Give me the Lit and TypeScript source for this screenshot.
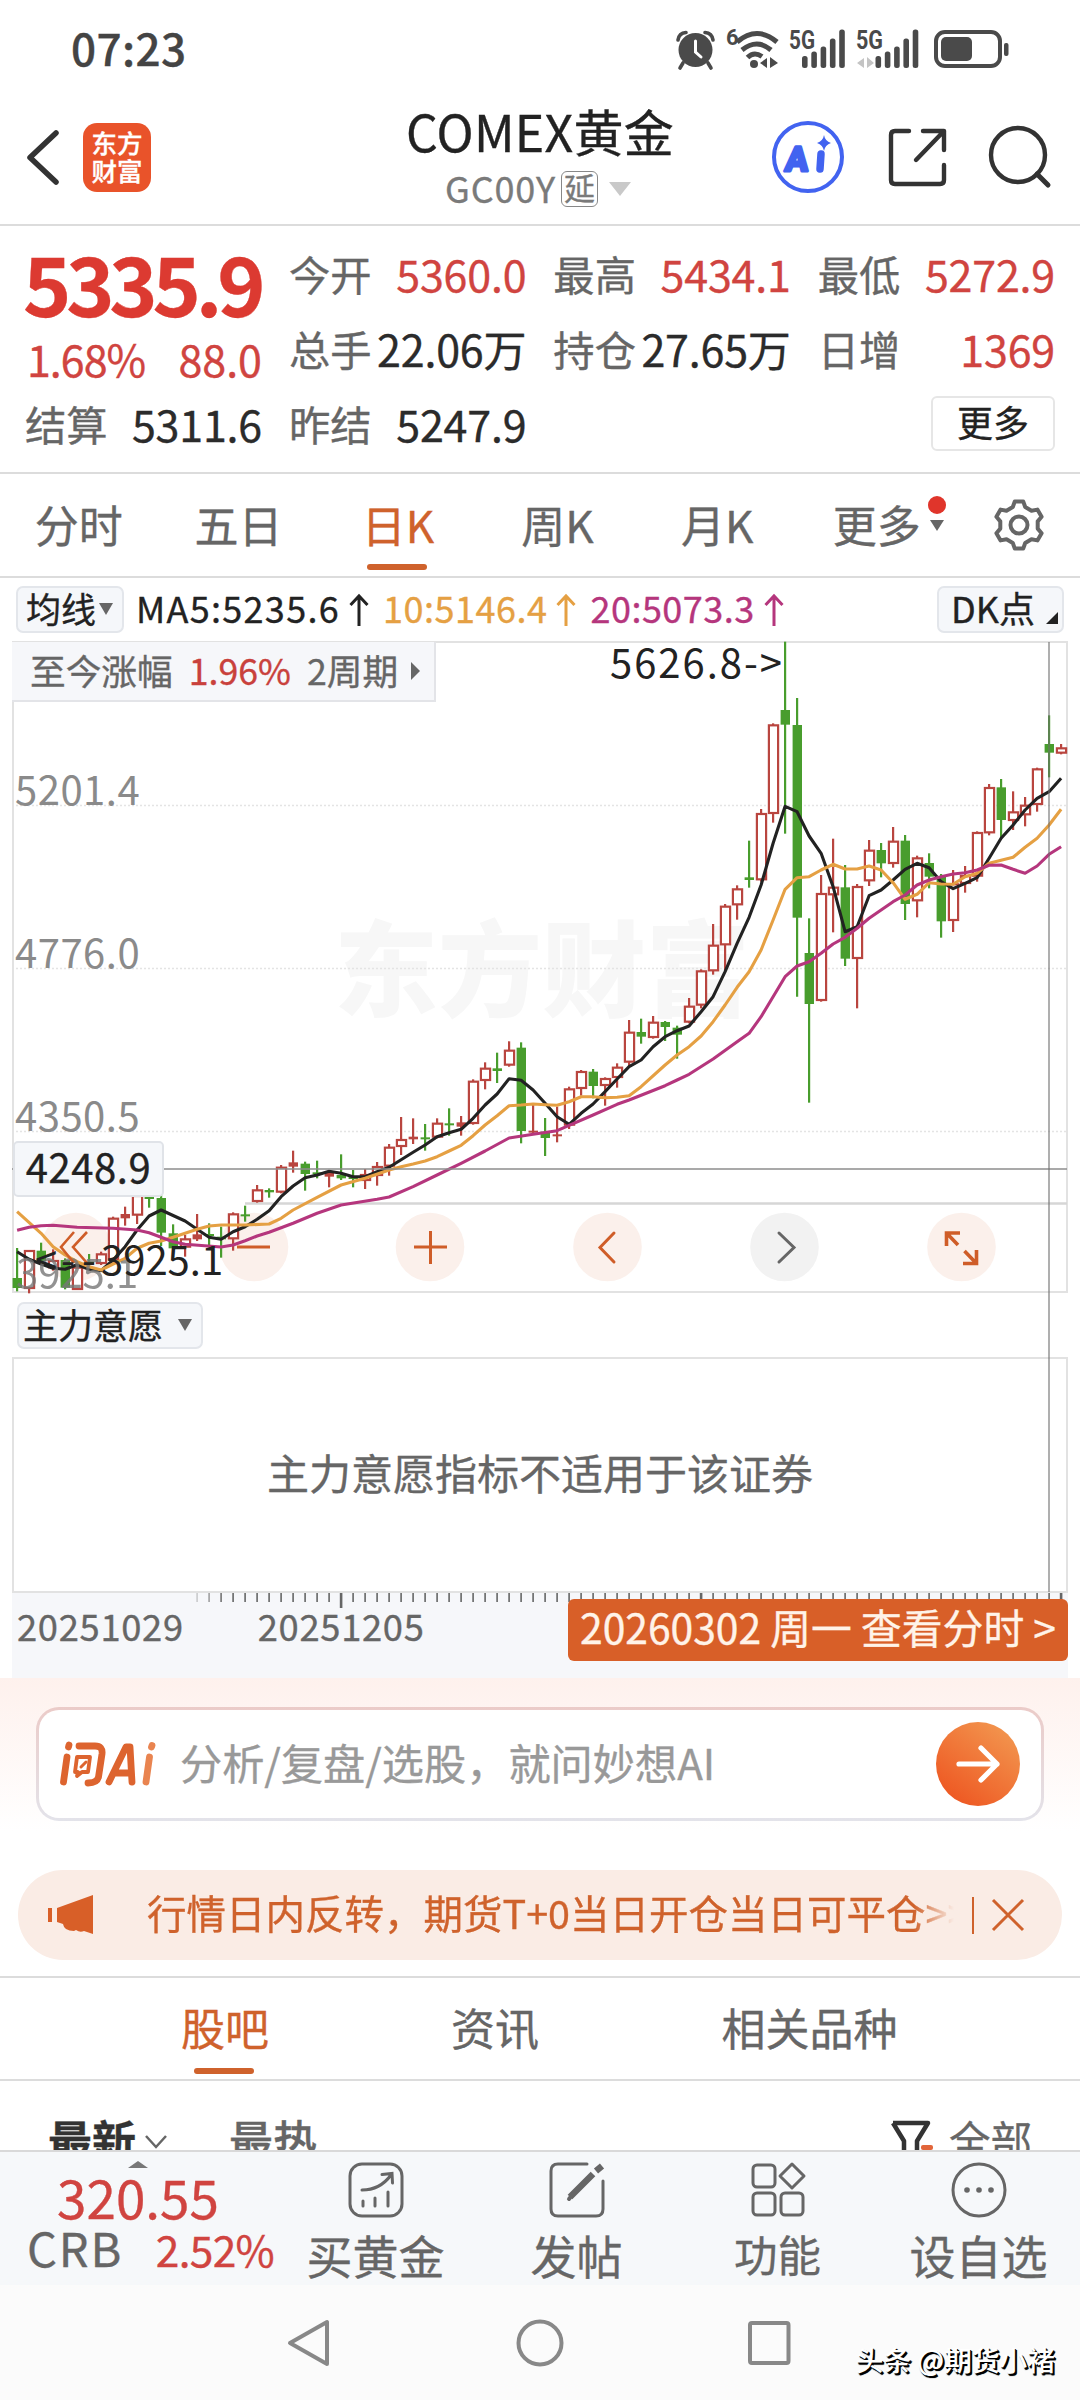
import { LitElement, html, css, svg } from "lit";
import { customElement } from "lit/decorators.js";

type Candle = [up: number, high: number, top: number, bottom: number, low: number];

/* Heights are in thirds of a pixel below the 5475 price line. */
const CANDLES: Candle[] = [
  [0, 1644, 1734, 1764, 1774], [1, 1650, 1650, 1767, 1780], [0, 1628, 1652, 1683, 1692], [1, 1648, 1680, 1705, 1712],
  [0, 1675, 1680, 1763, 1768], [1, 1695, 1700, 1770, 1770], [0, 1662, 1685, 1690, 1705], [1, 1655, 1660, 1692, 1695],
  [1, 1550, 1553, 1680, 1685], [1, 1520, 1542, 1555, 1577], [1, 1480, 1485, 1547, 1572], [0, 1480, 1491, 1496, 1523],
  [0, 1485, 1494, 1598, 1638], [0, 1573, 1600, 1645, 1650], [1, 1605, 1615, 1643, 1670], [1, 1542, 1603, 1618, 1623],
  [0, 1570, 1602, 1608, 1640], [0, 1580, 1610, 1618, 1673], [1, 1537, 1540, 1618, 1652], [0, 1517, 1543, 1549, 1565],
  [1, 1455, 1468, 1506, 1508], [0, 1465, 1470, 1477, 1493], [1, 1395, 1400, 1478, 1480], [1, 1352, 1387, 1400, 1418],
  [0, 1385, 1391, 1422, 1472], [0, 1382, 1417, 1423, 1435], [1, 1412, 1418, 1430, 1462], [0, 1363, 1425, 1435, 1440],
  [0, 1410, 1430, 1437, 1462], [1, 1407, 1422, 1443, 1467], [1, 1386, 1398, 1428, 1457], [1, 1332, 1340, 1400, 1427],
  [1, 1251, 1317, 1341, 1365], [1, 1255, 1310, 1318, 1332], [0, 1272, 1312, 1318, 1352], [1, 1255, 1268, 1313, 1315],
  [0, 1225, 1270, 1275, 1307], [1, 1248, 1267, 1280, 1307], [1, 1138, 1142, 1272, 1274], [1, 1087, 1103, 1143, 1168],
  [0, 1058, 1105, 1113, 1149], [1, 1024, 1049, 1097, 1100], [0, 1027, 1043, 1293, 1330], [1, 1215, 1292, 1297, 1302],
  [0, 1254, 1295, 1314, 1368], [1, 1220, 1303, 1307, 1327], [1, 1160, 1165, 1277, 1287], [1, 1110, 1113, 1167, 1187],
  [0, 1107, 1115, 1158, 1195], [1, 1132, 1134, 1158, 1217], [1, 1090, 1100, 1134, 1163], [1, 960, 995, 1088, 1100],
  [0, 956, 996, 1010, 1031], [1, 948, 965, 1014, 1016], [0, 963, 966, 981, 1023], [0, 977, 983, 1004, 1076],
  [1, 894, 917, 968, 970], [1, 808, 811, 917, 925], [1, 672, 734, 814, 824], [1, 612, 617, 736, 810],
  [1, 556, 565, 616, 659], [0, 422, 532, 540, 563], [1, 327, 339, 541, 545], [1, 70, 73, 342, 368],
  [0, -175, 30, 74, 401], [0, -6, 75, 653, 890], [0, 655, 759, 912, 1208], [1, 525, 579, 903, 905],
  [1, 416, 560, 586, 697], [0, 495, 562, 776, 798], [1, 552, 558, 777, 925], [1, 420, 449, 544, 558],
  [0, 429, 450, 490, 532], [1, 381, 422, 492, 503], [0, 405, 422, 612, 660], [1, 467, 472, 604, 652],
  [0, 460, 489, 530, 565], [0, 522, 530, 664, 713], [1, 510, 550, 663, 696], [1, 498, 525, 552, 578],
  [1, 394, 396, 530, 545], [1, 252, 261, 400, 406], [0, 237, 262, 360, 412], [1, 274, 334, 363, 390],
  [1, 291, 314, 346, 379], [1, 203, 205, 315, 335], [0, 46, 132, 158, 232], [1, 132, 142, 161, 163],
];

type Point = [index: number, y: number];

const MA5: Point[] = [
  [0, 1655], [1, 1678], [2, 1692], [3, 1705], [4, 1708], [5, 1694], [6, 1708], [7, 1712], [8, 1680], [9, 1640],
  [10, 1590], [11, 1548], [12, 1530], [14, 1563], [15, 1588], [16, 1612], [17, 1618], [18, 1595], [19, 1580],
  [20, 1558], [21, 1532], [22, 1490], [23, 1458], [24, 1433], [25, 1425], [26, 1414], [27, 1420], [28, 1430],
  [29, 1430], [30, 1415], [31, 1402], [33, 1357], [34, 1335], [35, 1310], [36, 1298], [37, 1288], [38, 1255],
  [39, 1215], [40, 1182], [41, 1136], [42, 1141], [43, 1170], [44, 1210], [45, 1250], [46, 1273], [47, 1240],
  [48, 1212], [49, 1175], [50, 1137], [51, 1100], [52, 1080], [53, 1040], [54, 1010], [55, 992], [56, 978],
  [57, 935], [58, 890], [59, 815], [60, 730], [61, 652], [62, 555], [63, 430], [64, 319], [65, 335], [66, 408],
  [67, 460], [68, 560], [69, 695], [70, 680], [71, 587], [72, 570], [73, 540], [74, 508], [75, 490], [76, 503],
  [77, 545], [78, 566], [79, 550], [80, 533], [81, 475], [82, 415], [83, 375], [84, 330], [85, 295], [86, 275], [87, 235],
];

const MA10: Point[] = [
  [0, 1535], [2, 1600], [3, 1640], [4, 1665], [5, 1685], [6, 1700], [7, 1710], [8, 1692], [9, 1675], [10, 1645],
  [11, 1630], [12, 1623], [13, 1612], [15, 1588], [16, 1578], [17, 1575], [19, 1575], [21, 1572], [22, 1555],
  [23, 1530], [25, 1492], [27, 1455], [29, 1435], [31, 1410], [32, 1400], [33, 1392], [34, 1383], [35, 1370],
  [36, 1353], [37, 1336], [38, 1307], [39, 1275], [40, 1247], [41, 1217], [42, 1215], [43, 1212], [44, 1214],
  [45, 1216], [46, 1205], [47, 1190], [48, 1190], [49, 1193], [50, 1192], [51, 1187], [52, 1160], [54, 1095],
  [55, 1065], [56, 1040], [57, 1008], [58, 965], [59, 915], [60, 862], [61, 815], [62, 750], [63, 660], [64, 568],
  [65, 533], [66, 530], [67, 510], [68, 493], [69, 507], [70, 507], [71, 498], [72, 510], [73, 548], [74, 598],
  [75, 583], [76, 548], [77, 552], [78, 553], [79, 530], [80, 520], [81, 490], [83, 472], [84, 442], [85, 415],
  [86, 375], [87, 328],
];

const MA20: Point[] = [
  [0, 1591], [1, 1582], [2, 1577], [3, 1576], [5, 1582], [8, 1585], [10, 1590], [11, 1598], [12, 1612], [13, 1625],
  [14, 1633], [17, 1641], [18, 1635], [19, 1622], [20, 1608], [21, 1597], [23, 1570], [25, 1540], [27, 1515],
  [30, 1498], [31, 1491], [33, 1460], [35, 1425], [37, 1390], [39, 1353], [41, 1314], [43, 1303], [45, 1292],
  [46, 1276], [48, 1245], [50, 1213], [51, 1200], [54, 1157], [55, 1140], [56, 1123], [58, 1077], [60, 1025],
  [61, 1000], [62, 950], [63, 890], [64, 830], [65, 798], [66, 785], [67, 760], [68, 732], [69, 712], [70, 685],
  [71, 655], [73, 605], [74, 585], [75, 555], [76, 540], [77, 530], [78, 522], [79, 518], [80, 510], [81, 496],
  [82, 495], [83, 508], [84, 520], [85, 498], [86, 463], [87, 440],
];

const cx = (i: number) => 5.1 + 12 * i;
const cy = (v: number) => v / 3 + 59;

const line = (points: Point[], color: string) => svg`
  <polyline points=${points.map(([i, v]) => `${cx(i).toFixed(1)},${cy(v).toFixed(1)}`).join(" ")}
    fill="none" stroke=${color} stroke-width="3.1" stroke-linejoin="round" />`;

const candle = ([up, high, top, bottom, low]: Candle, i: number) => {
  const x = cx(i);
  const h = cy(bottom) - cy(top);
  const c = up ? "#b9453f" : "#489d2d";
  return svg`
    <line x1=${x} x2=${x} y1=${cy(high)} y2=${cy(low)} stroke=${c} stroke-width="2.2" />
    ${up && h > 5
      ? svg`<rect x=${x - 4.2} y=${cy(top) + 1} width="9.2" height=${h - 2} fill="#fff" stroke=${c} stroke-width="2.2" />`
      : svg`<rect x=${x - 4.5} y=${cy(top)} width="9.4" height=${Math.max(h, 2)} fill=${c} />`}`;
};

@customElement("kline-chart")
export class KlineChart extends LitElement {
  static styles = css`
    :host { display: block; position: relative; height: 652px; }
    svg { display: block; overflow: visible; }
    .t { font-size: 40px; }
    .lab { letter-spacing: 0.5px; }
    .badge {
      position: absolute; left: 0; top: 1px; height: 60px; width: 424px; box-sizing: border-box;
      display: flex; align-items: center; gap: 16px; padding: 0 0 3px 18px;
      background: #f6f7fa; border-right: 2px solid #e3e4e8; border-bottom: 2px solid #e3e4e8;
      font-size: 35.7px; color: #666;
    }
    .pct { color: #c9413c; }
    .tri { width: 0; height: 0; border: 9px solid transparent; border-left-color: #666; border-right: 0; margin-left: -3px; margin-top: 2px; }
    .price {
      position: absolute; left: 1px; top: 500px; width: 151px; height: 56px; box-sizing: border-box;
      display: flex; align-items: center; justify-content: center; padding-bottom: 7px; letter-spacing: 0.6px;
      background: #f5f7fa; border: 2px solid #e0e3e8; border-radius: 5px; font-size: 40px; color: #222;
    }
  `;

  render() {
    return html`
      <svg width="1056" height="652" viewBox="0 0 1056 652">
        <text x="322" y="368" font-size="104" font-weight="900" fill="#f7f7f7">东方财富</text>
        ${[164.5, 327.5, 490.5].map((y) => svg`
          <line x1="0" x2="1055" y1=${y} y2=${y} stroke="#e4e4e4" stroke-width="1.5" stroke-dasharray="2 2" />`)}
        <rect x="1" y="1" width="1054" height="650" fill="none" stroke="#e2e2e2" stroke-width="2" />
        <line x1="233" x2="1055" y1="562.5" y2="562.5" stroke="#d6d6d6" stroke-width="2.6" />
        ${[64, 242, 418, 595.5, 772.5, 949.5].map((x, i) => svg`
          <circle cx=${x} cy="606" r="34.3" fill=${i === 4 ? "#f2f2f2" : "#fbf0eb"} />`)}
        <g class="t lab" fill="#8a8a8a">
          <text x="3" y="164">5201.4</text>
          <text x="3" y="327">4776.0</text>
          <text x="3" y="490">4350.5</text>
        </g>
        ${CANDLES.map(candle)}
        ${line(MA5, "#222")}
        ${line(MA10, "#e5a043")}
        ${line(MA20, "#b5367d")}
        <text class="t" x="4" y="647" fill="#777" opacity="0.8">3925.1</text>
        <line x1="0" x2="1055" y1="528" y2="528" stroke="#8c8c8c" stroke-width="1.6" />
        <g fill="none" stroke="#cf5d28" stroke-width="3">
          <path d="M62 591 L49 606 L62 622 M75 591 L61 606 L75 622" stroke-width="2.6" />
          <path d="M225 606 H258" />
          <path d="M402 606 H435 M418.500 590 V623" />
          <path d="M602 592 L588 606.500 L602 621" stroke-linecap="round" />
          <path d="M767 592 L782 606.500 L767 621" stroke="#666" stroke-linecap="round" />
          <path d="M934.500 605 V592 H948 M934.500 592 L946 604 M964.500 609 V622.500 H951 M964.500 622.500 L952.500 610" stroke-width="3.6" />
        </g>
        <text class="t" x="598" y="37" fill="#222" textLength="172" lengthAdjust="spacing">5626.8-&gt;</text>
        <text class="t" x="23 49 70" y="634" fill="#222">&lt;--</text>
        <text class="t" x="89" y="634" fill="#222">3925.1</text>
      </svg>
      <div class="badge"><span>至今涨幅</span><span class="pct">1.96%</span><span>2周期</span><i class="tri"></i></div>
      <div class="price">4248.9</div>
    `;
  }
}

const QUOTES: [string, string, boolean][][] = [
  [["今开", "5360.0", true], ["最高", "5434.1", true], ["最低", "5272.9", true]],
  [["总手", "22.06万", false], ["持仓", "27.65万", false], ["日增", "1369", true]],
];

@customElement("app-root")
export class AppRoot extends LitElement {
  static styles = css`
    :host {
      display: block; width: 1080px; height: 2400px; overflow: hidden; background: #fff; color: #222;
      font-family: "Noto Sans CJK SC", "Noto Sans", sans-serif; line-height: 1; white-space: nowrap;
      -webkit-text-stroke: 0.35px currentColor;
    }
    svg { display: block; flex: none; overflow: visible; }
    .status { height: 100px; display: flex; align-items: center; padding: 0 69px 0 71px; box-sizing: border-box; }
    .time { font-size: 44px; font-weight: 500; color: #444; flex: 1; line-height: 50px; margin-top: -6px; letter-spacing: 0.4px; }
    .sys { display: block; }
    .sys text, .ai text { font-family: Roboto, sans-serif; font-weight: 700; }

    .head { height: 124px; display: flex; border-bottom: 2px solid #dcdcdc; }
    .headL { width: 270px; display: flex; align-items: flex-start; padding: 23px 0 0 25px; gap: 23px; box-sizing: border-box; }
    .logo {
      width: 68px; height: 69px; border-radius: 14px; background: #e9532a; color: #fff;
      font-size: 25.5px; font-weight: 500; line-height: 28px; text-align: center; padding-top: 5px; box-sizing: border-box;
    }
    .titles { width: 540px; display: flex; flex-direction: column; align-items: center; }
    .title { font-size: 50px; line-height: 54px; margin-top: 3px; letter-spacing: 0.3px; }
    .sub { display: flex; align-items: center; font-size: 36px; color: #7a7a7a; height: 40px; margin: 12px 0 0 -4px; }
    .sub span { letter-spacing: 0.8px; margin: -5px 5px 0 0; }
    .delay { width: 37px; height: 36px; border: 1.5px solid #888; border-radius: 6px; box-sizing: border-box; font-size: 31px; line-height: 30px; text-align: center; }
    .down { width: 0; height: 0; border: 11px solid transparent; border-top: 14px solid #c9c9c9; border-bottom: 0; margin-left: 11px; }
    .headR { display: flex; align-items: flex-start; margin-left: -39px; padding-top: 20px; gap: 39px; }
    .search { margin-left: 2px; }

    .quote {
      height: 248px; padding: 10px 25px 0 25px; box-sizing: border-box; border-bottom: 2px solid #dcdcdc;
      display: grid; grid-template-columns: 237px repeat(3, 1fr); grid-template-rows: 75px 75px 75px; column-gap: 27px;
    }
    .main { grid-row: 1 / 3; display: flex; flex-direction: column; color: #dc3a31; }
    .last { font-size: 82px; font-weight: 700; letter-spacing: -5.2px; line-height: 90px; margin-top: 1px; margin-left: -2px; }
    .chg { display: flex; justify-content: space-between; font-size: 43px; line-height: 54px; margin-top: 4px; color: #d04440; }
    .chg .p { letter-spacing: -1px; margin-left: 2px; }
    .cell { display: flex; justify-content: space-between; align-items: center; font-size: 43px; color: #2b2b2b; }
    .cell label { font-size: 41.3px; color: #666; }
    .cell b { font-weight: 400; letter-spacing: -0.2px; }
    .cell b.up { color: #d04440; }
    .more {
      grid-column: 4; justify-self: end; align-self: center; width: 124px; height: 55px; box-sizing: border-box;
      border: 2px solid #e6e6e6; border-radius: 6px; font-size: 36px; line-height: 47px; text-align: center;
    }

    .tabs { height: 104px; box-sizing: border-box; border-bottom: 2px solid #dcdcdc; display: flex; align-items: center; color: #666; font-size: 44px; }
    .tab { width: 159.6px; height: 102px; display: flex; flex-direction: column; align-items: center; position: relative; line-height: 101px; margin-left: -1px; margin-right: 1px; }
    .on { color: #cf622c; }
    .bar { position: absolute; bottom: 6px; left: 50%; width: 60px; height: 6px; margin-left: -31px; background: #cf622c; border-radius: 3px; }
    .mark { position: absolute; left: 131px; top: 22px; }
    .gear { margin-left: 35px; }

    .ma { height: 63px; display: flex; align-items: center; padding: 0 16px; font-size: 36px; }
    .btn {
      height: 47px; box-sizing: border-box; border: 2px solid #e3e6eb; border-radius: 7px; background: #f5f7fa;
      display: flex; align-items: center; font-size: 35px; color: #222; padding-bottom: 5px;
    }
    .caret { width: 0; height: 0; border: 7px solid transparent; border-top: 12px solid #666; border-bottom: 0; margin-top: 4px; }
    .avg { width: 108px; padding-left: 8px; gap: 3px; margin-right: 12px; }
    .m { display: flex; align-items: center; gap: 9px; margin-right: 14px; letter-spacing: 0.5px; }
    .m:nth-child(2) { letter-spacing: 1.3px; }
    .m span { margin-top: -5px; }
    .dk { margin-left: auto; width: 127px; padding-left: 12px; font-size: 36px; gap: 10px; }
    .body { position: relative; padding: 0 12px; }
    .sel { width: 186px; height: 47px; margin: 9px 0 0 5px; padding-left: 4px; gap: 15px; }
    .panel {
      height: 236px; margin-top: 8px; border: 2px solid #e2e2e2; box-sizing: border-box; color: #666;
      display: flex; align-items: center; justify-content: center; font-size: 42px; padding-bottom: 7px;
    }
    .vline { position: absolute; left: 1048px; top: 1px; width: 2px; height: 950px; background: rgba(110, 110, 110, 0.55); }
    .axis { height: 85px; background: #f6f7fa; position: relative; display: flex; font-size: 36.3px; color: #666; }
    .ticks { position: absolute; left: 0; top: 0; }
    .axis span { line-height: 65px; margin-left: 5px; letter-spacing: 0.7px; }
    .axis .d2 { margin-left: 74px; }
    .pill {
      margin: 6px 0 0 auto; width: 500px; height: 62px; box-sizing: border-box; border-radius: 6px; background: #d85f28;
      color: #fff3e8; font-size: 40.8px; line-height: 55px; text-align: center; position: relative;
    }

    .ask { height: 191px; background: linear-gradient(#fef1ed, #fff 80%); padding: 29px 36px 0; box-sizing: border-box; }
    .box {
      height: 114px; border-radius: 23px; padding: 3px; box-sizing: border-box;
      background: linear-gradient(#ebcbc8, #e3e3ea);
    }
    .in { height: 108px; border-radius: 20px; background: #fff; display: flex; align-items: center; padding: 0 21px; }
    .ph { font-size: 42.2px; color: #999; margin: -3px 0 0 24px; flex: 1; }

    .notice {
      height: 90px; margin: 1px 18px 0; border-radius: 45px; background: #faece5; color: #cf622c;
      display: flex; align-items: center; padding: 0 37px 0 29px;
    }
    .msg {
      font-size: 39.5px; margin: -6px 0 0 53px; width: 808px; overflow: hidden; line-height: 60px;
      -webkit-mask-image: linear-gradient(90deg, #000 95%, transparent 100%);
      mask-image: linear-gradient(90deg, #000 95%, transparent 100%);
    }
    .sep { width: 2px; height: 37px; background: #cf622c; margin: 0 17px 0 18px; }
    .tabs2 {
      margin-top: 16px; height: 105px; box-sizing: border-box; border-top: 2px solid #dcdcdc; border-bottom: 2px solid #dcdcdc;
      display: flex; font-size: 44px; color: #666; padding-left: 90px;
    }
    .tabs2 .tab { width: 270px; line-height: 98px; margin: 0; }
    .tabs2 .tab:last-child { width: 359px; }
    .list { height: 69px; overflow: hidden; display: flex; padding: 36px 48px 0 48px; box-sizing: border-box; font-size: 44px; line-height: 44px; color: #666; }
    .list svg { margin-top: 2px; }
    .hot { font-weight: 500; margin-left: 61px; flex: 1; }
    .new { font-weight: 700; color: #333; }
    .all { font-size: 41.5px; margin-left: 17px; }

    .dock { height: 135px; box-sizing: border-box; border-top: 2px solid #d9d9d9; background: #f6f8fa; display: flex; color: #666; }
    .crb { width: 288px; display: flex; flex-direction: column; align-items: center; padding-right: 12px; box-sizing: border-box; color: #d04440; }
    .tip { width: 0; height: 0; border: 10px solid transparent; border-bottom: 7px solid #777; border-top: 0; margin-top: 9px; }
    .big { font-size: 53px; line-height: 56px; margin-top: 0; }
    .row { display: flex; align-items: baseline; width: 246px; justify-content: space-between; line-height: 46px; font-size: 42.500px; letter-spacing: -0.7px; margin-left: 26px; margin-top: 0; }
    .row span { font-size: 47px; letter-spacing: 1.8px; color: #666; margin-left: -1px; }
    .item { width: 201px; display: flex; flex-direction: column; align-items: center; font-size: 46px; padding-top: 10px; box-sizing: border-box; }
    .item div { line-height: 56px; margin-top: 8px; }
    .item:nth-child(3) div { font-size: 43.5px; }
    .items { display: flex; margin-left: -13px; }
    .nav { height: 115px; background: #fbfbfb; position: relative; display: flex; justify-content: center; align-items: center; padding-right: 3px; box-sizing: border-box; }
    .mk { position: absolute; right: 25px; bottom: 24px; font-size: 27.7px; font-weight: 500; line-height: 34px; color: #fff; text-shadow: 1.5px 1.5px 1px #000, 1px 1px 0 #000, 2px 2px 0 #111; -webkit-text-stroke: 0; }
  `;

  private status() {
    const bars = (x: number) => [0, 1, 2, 3, 4].map((n) =>
      svg`<rect x=${x + n * 9.3} y=${[27, 22.5, 17.5, 9.5, 0.5][n]} width="5.6" height=${[12, 16.5, 21.5, 29.5, 38.5][n]} rx="2.5" />`);
    return html`
      <div class="status">
        <div class="time">07:23</div>
        <svg class="sys" width="336" height="42" viewBox="675 30 336 42" fill="#4a4a4a">
          <path d="M678 41 Q679 34 686 33.500 M713 41 Q712 34 705 33.500 M683 64 L680 69 M708 64 L711 69" stroke="#4a4a4a" stroke-width="3.600" fill="none" stroke-linecap="round" />
          <circle cx="695.500" cy="51" r="17" />
          <path d="M695.500 42 V53 L701 58" stroke="#fff" stroke-width="3" fill="none" stroke-linecap="round" />
          <text x="726" y="46" font-size="22">6</text>
          <g fill="none" stroke="#4a4a4a" stroke-width="5" stroke-linecap="butt">
            <path d="M737 43 Q757 26 777 43" />
            <path d="M742 51 Q757 39 771 51" />
            <path d="M747.500 58.500 Q754 52 762 57.500" />
          </g>
          <circle cx="754" cy="65" r="4" />
          <path d="M767 59 V69 L760 64 Z M770 69 V58 L778 64 Z" />
          <text x="789" y="50" font-size="25" textLength="26" lengthAdjust="spacingAndGlyphs">5G</text>
          <g transform="translate(0 30)">${bars(802)}</g>
          <text x="856" y="50" font-size="25" textLength="27" lengthAdjust="spacingAndGlyphs">5G</text>
          <path d="M864 59 V69 L857 64 Z M867 69 V58 L874 64 Z" fill="#c4c4c4" />
          <g transform="translate(0 30)">${bars(875.5)}</g>
          <rect x="936" y="33" width="64" height="34" rx="9" fill="none" stroke="#4a4a4a" stroke-width="4" />
          <rect x="941" y="38" width="31" height="24" rx="5" />
          <rect x="1004" y="44" width="4.500" height="13" rx="2" />
        </svg>
      </div>`;
  }

  private header() {
    return html`
      <div class="head">
        <div class="headL">
          <svg width="35" height="69" viewBox="25 123 35 69"><path d="M56 133 L30 157.500 L56 182" fill="none" stroke="#333" stroke-width="5.500" stroke-linecap="round" stroke-linejoin="round" /></svg>
          <div class="logo">东方<br />财富</div>
        </div>
        <div class="titles">
          <div class="title">COMEX黄金</div>
          <div class="sub"><span>GC00Y</span><div class="delay">延</div><i class="down"></i></div>
        </div>
        <div class="headR">
          <svg class="ai" width="76" height="76" viewBox="0 0 76 76">
            <circle cx="37" cy="37" r="34" fill="none" stroke="#4263f0" stroke-width="4" />
            <text x="15" y="51" font-size="34" font-weight="900" fill="#4263f0" stroke="#4263f0" stroke-width="3.200" stroke-linejoin="round" transform="skewX(-5) translate(3 0)">A</text>
            <path d="M50 34 L49 49" stroke="#4263f0" stroke-width="7.500" stroke-linecap="round" />
            <path d="M53 15 Q54 21 60 23 Q54 25 53 31 Q52 25 46 23 Q52 21 53 15 Z" fill="#4263f0" />
          </svg>
          <svg width="62" height="76" viewBox="885 120 62 76" fill="none" stroke="#333" stroke-width="4.400" stroke-linecap="round" stroke-linejoin="round">
            <path d="M908 131 H894 Q890 131 890 135 V180 Q890 184 894 184 H939 Q943 184 943 180 V165 M922 131 H943 V150 M943 131 L915 160" />
          </svg>
          <svg class="search" width="62" height="76" viewBox="985 120 62 76" fill="none" stroke="#333" stroke-width="4.400" stroke-linecap="round">
            <circle cx="1014" cy="155" r="27" /><path d="M1033 174 L1044 185" stroke-width="5" />
          </svg>
        </div>
      </div>`;
  }

  private quote() {
    const cell = ([l, v, up]: [string, string, boolean]) =>
      html`<div class="cell"><label>${l}</label><b class=${up ? "up" : ""}>${v}</b></div>`;
    return html`
      <div class="quote">
        <div class="main">
          <div class="last">5335.9</div>
          <div class="chg"><span class="p">1.68%</span><span>88.0</span></div>
        </div>
        ${QUOTES[0].map(cell)} ${QUOTES[1].map(cell)}
        ${cell(["结算", "5311.6", false])} ${cell(["昨结", "5247.9", false])}
        <div class="more">更多</div>
      </div>`;
  }

  private tabs() {
    const teeth = Array.from({ length: 6 }, (_, n) => n);
    const pts = teeth.flatMap((n) => {
      const p = (r: number, deg: number) => {
        const a = ((n * 60 + deg - 90) * Math.PI) / 180;
        return `${(26 + r * Math.cos(a)).toFixed(1)},${(27 + r * Math.sin(a)).toFixed(1)}`;
      };
      return [p(24, -10), p(24, 10), p(19, 19), p(19, 41)];
    }).join(" ");
    return html`
      <div class="tabs">
        ${["分时", "五日", "日K", "周K", "月K"].map((t) => html`
          <div class="tab ${t === "日K" ? "on" : ""}">${t}${t === "日K" ? html`<i class="bar"></i>` : ""}</div>`)}
        <div class="tab">更多
          <svg class="mark" width="20" height="40" viewBox="0 0 20 40"><circle cx="9" cy="9" r="9" fill="#e0352b" /><path d="M2 24 H16 L9 35 Z" fill="#666" /></svg>
        </div>
        <svg class="gear" width="52" height="54" viewBox="0 0 52 54" fill="none" stroke="#666" stroke-width="4" stroke-linejoin="round">
          <polygon points=${pts} /><circle cx="26" cy="27" r="8.500" />
        </svg>
      </div>`;
  }

  private avgRow() {
    const arrow = (c: string) => html`<svg width="20" height="34" viewBox="0 0 20 34" fill="none" stroke=${c} stroke-width="3"><path d="M10 33 V3 M1.500 12 L10 3 L18.500 12" /></svg>`;
    return html`
      <div class="ma">
        <div class="btn avg">均线<i class="caret"></i></div>
        ${[["MA5:5235.6", "#222"], ["10:5146.4", "#e5a043"], ["20:5073.3", "#b5367d"]].map(([t, c]) => html`
          <div class="m" style="color:${c}"><span>${t}</span>${arrow(c)}</div>`)}
        <div class="btn dk">DK点<svg width="13" height="36" viewBox="0 0 13 36"><path d="M13 23 V35 H1 Z" fill="#222" /></svg></div>
      </div>`;
  }

  private chart() {
    const ticks = Array.from({ length: 73 }, (_, n) => n + 15);
    return html`
      <div class="body">
        <kline-chart></kline-chart>
        <div class="btn sel">主力意愿<i class="caret"></i></div>
        <div class="panel">主力意愿指标不适用于该证券</div>
        <i class="vline"></i>
        <div class="axis">
          <svg class="ticks" width="1056" height="20" viewBox="0 0 1056 20">
            ${ticks.map((i) => svg`<line x1=${cx(i)} x2=${cx(i)} y1="0" y2=${i === 27 ? 15 : 9}
              stroke="#666" stroke-width=${i % 30 === 27 ? 2.6 : 1.6} opacity=${Math.min(1, (i - 14) * 0.3)} />`)}
          </svg>
          <span>20251029</span><span class="d2">20251205</span>
          <div class="pill">20260302 周一 查看分时 &gt;</div>
        </div>
      </div>`;
  }

  private ask() {
    return html`
      <div class="ask"><div class="box"><div class="in">
        <svg width="96" height="46" viewBox="60 1741 96 46" fill="none" stroke="#dd642f" stroke-width="6.800" stroke-linecap="round" stroke-linejoin="round">
          <path d="M69 1745 L68.500 1747 M67 1757 L63.500 1782" />
          <path d="M79 1746 H95 Q103 1746 102 1754 L98.500 1777 Q97 1783 88 1783" />
          <path d="M77 1757 H90 L88 1772 H82 L77 1776 L78 1772 H75 Z" stroke-width="3.800" />
          <path d="M81 1767 L86 1762" stroke-width="3" />
          <path d="M109 1782 L126 1747 H130 L132 1782 M117 1773 H130" />
          <path d="M152 1745.500 L151.500 1747 M149.500 1757 L146 1782" stroke="#e98450" />
        </svg>
        <div class="ph">分析/复盘/选股，就问妙想AI</div>
        <svg width="84" height="84" viewBox="0 0 84 84">
          <defs><linearGradient id="g" x1="0.2" y1="0.9" x2="0.8" y2="0.1"><stop offset="0" stop-color="#ee5a24" /><stop offset="1" stop-color="#f2924c" /></linearGradient></defs>
          <circle cx="42" cy="42" r="42" fill="url(#g)" />
          <path d="M23 42 H61 M45 26 L61 42 L45 58" fill="none" stroke="#fff" stroke-width="5.200" stroke-linecap="round" stroke-linejoin="round" />
        </svg>
      </div></div></div>`;
  }

  private notice() {
    return html`
      <div class="notice">
        <svg width="47" height="42" viewBox="47 1893 47 42" fill="#d85f28">
          <path d="M48 1907 H52 V1921 H48 Z M57 1907 L93 1894 V1933 L84 1930 Q80 1932 76 1929 L74 1930 Q64 1930 63 1923 L57 1921 Z" />
        </svg>
        <div class="msg">行情日内反转，期货T+0当日开仓当日可平仓&gt;&gt;</div>
        <i class="sep"></i>
        <svg width="34" height="34" viewBox="0 0 34 34"><path d="M2 2 L32 32 M32 2 L2 32" stroke="#cf622c" stroke-width="3" /></svg>
      </div>`;
  }

  render() {
    return html`
      ${this.status()} ${this.header()} ${this.quote()} ${this.tabs()} ${this.avgRow()} ${this.chart()} ${this.ask()} ${this.notice()}
      <div class="tabs2">
        <div class="tab on">股吧<i class="bar"></i></div>
        <div class="tab">资讯</div>
        <div class="tab">相关品种</div>
      </div>
      <div class="list">
        <span class="new">最新</span>
        <svg width="32" height="40" viewBox="0 0 32 40"><path d="M10 17 L20 28 L30 17" fill="none" stroke="#666" stroke-width="2.500" /></svg>
        <span class="hot">最热</span>
        <svg width="42" height="50" viewBox="0 0 42 50"><path d="M3 4 H38 L27 22 V48 M3 4 L14 22 V48" fill="none" stroke="#333" stroke-width="4.500" stroke-linejoin="round" /><rect x="31" y="26" width="12" height="5" rx="2" fill="#e2653a" /></svg>
        <span class="all">全部</span>
      </div>
      <div class="dock">
        <div class="crb">
          <i class="tip"></i>
          <div class="big">320.55</div>
          <div class="row"><span>CRB</span>2.52%</div>
        </div>
        <div class="items">
          <div class="item">
            <svg width="56" height="56" viewBox="0 0 56 56" fill="none" stroke="#666" stroke-width="3" stroke-linecap="round">
              <rect x="2" y="2" width="52" height="52" rx="12" />
              <path d="M14 28 Q32 28 43 13 M34 12.500 L44 11.500 L44.500 21 M15 39 V44 M27 36 V44 M40 30 V44" />
            </svg><div>买黄金</div>
          </div>
          <div class="item">
            <svg width="56" height="56" viewBox="0 0 56 56" fill="none" stroke="#666" stroke-width="3" stroke-linecap="round">
              <path d="M38 2 H9 Q2 2 2 9 V47 Q2 54 9 54 H47 Q54 54 54 47 V19" />
              <path d="M47 9 L53 4 M44 12 L21 35" stroke-width="6.500" stroke-linecap="butt" /><path d="M24 32 L20 37" stroke-width="4" />
            </svg><div>发帖</div>
          </div>
          <div class="item">
            <svg width="56" height="56" viewBox="0 0 56 56" fill="none" stroke="#666" stroke-width="3" stroke-linejoin="round">
              <rect x="3" y="3" width="22" height="22" rx="4" /><rect x="3" y="31" width="22" height="22" rx="4" /><rect x="31" y="31" width="22" height="22" rx="4" />
              <path d="M42 2 L54 14 L42 26 L30 14 Z" />
            </svg><div>功能</div>
          </div>
          <div class="item">
            <svg width="56" height="56" viewBox="0 0 56 56"><circle cx="28" cy="28" r="26" fill="none" stroke="#666" stroke-width="3" /><g fill="#666"><circle cx="16" cy="28" r="2.800" /><circle cx="28" cy="28" r="2.800" /><circle cx="40" cy="28" r="2.800" /></g></svg>
            <div>设自选</div>
          </div>
        </div>
      </div>
      <div class="nav">
        <svg width="504" height="50" viewBox="287 2318 504 50" fill="none" stroke="#888" stroke-width="4" stroke-linejoin="round">
          <path d="M327 2322 V2364 L290 2343 Z" /><circle cx="540" cy="2343" r="21.500" /><rect x="750" y="2323" width="38.500" height="40" rx="2" />
        </svg>
        <div class="mk">头条 @期货小褚</div>
      </div>
    `;
  }
}
